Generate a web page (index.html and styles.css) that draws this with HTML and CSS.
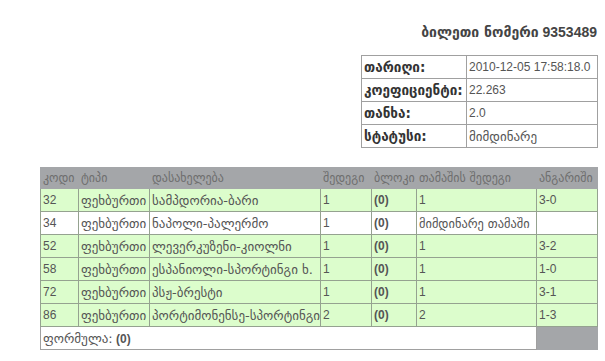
FILE: index.html
```html
<!DOCTYPE html>
<html>
<head>
<meta charset="utf-8">
<link rel="stylesheet" href="styles.css">
</head>
<body>
<div class="page">
  <div class="title"><span class="ka">ბილეთი ნომერი</span> 9353489</div>
  <table class="info">
    <tr><th class="ka">თარიღი:</th><td>2010-12-05 17:58:18.0</td></tr>
    <tr><th class="ka">კოეფიციენტი:</th><td>22.263</td></tr>
    <tr><th class="ka">თანხა:</th><td>2.0</td></tr>
    <tr><th class="ka">სტატუსი:</th><td class="ka">მიმდინარე</td></tr>
  </table>
  <table class="bets">
    <colgroup>
      <col class="c1"><col class="c2"><col class="c3"><col class="c4"><col class="c5"><col class="c6"><col class="c7">
    </colgroup>
    <tr class="head"><th>კოდი</th><th>ტიპი</th><th>დასახელება</th><th>შედეგი</th><th>ბლოკი</th><th>თამაშის შედეგი</th><th>ანგარიში</th></tr>
    <tr class="won"><td>32</td><td class="ka">ფეხბურთი</td><td class="ka">სამპდორია-ბარი</td><td>1</td><td><b>(0)</b></td><td>1</td><td>3-0</td></tr>
    <tr class="open"><td>34</td><td class="ka">ფეხბურთი</td><td class="ka">ნაპოლი-პალერმო</td><td>1</td><td><b>(0)</b></td><td class="ka fit">მიმდინარე თამაში</td><td></td></tr>
    <tr class="won"><td>52</td><td class="ka">ფეხბურთი</td><td class="ka">ლევერკუზენი-კიოლნი</td><td>1</td><td><b>(0)</b></td><td>1</td><td>3-2</td></tr>
    <tr class="won"><td>58</td><td class="ka">ფეხბურთი</td><td class="ka">ესპანიოლი-სპორტინგი ხ.</td><td>1</td><td><b>(0)</b></td><td>1</td><td>1-0</td></tr>
    <tr class="won"><td>72</td><td class="ka">ფეხბურთი</td><td class="ka">პსჟ-ბრესტი</td><td>1</td><td><b>(0)</b></td><td>1</td><td>3-1</td></tr>
    <tr class="won"><td>86</td><td class="ka">ფეხბურთი</td><td class="ka">პორტიმონენსე-სპორტინგი</td><td>2</td><td><b>(0)</b></td><td>2</td><td>1-3</td></tr>
    <tr class="foot"><td colspan="6"><span class="ka">ფორმულა:</span> <b>(0)</b></td><td class="gray"></td></tr>
  </table>
</div>
</body>
</html>
```
FILE: styles.css
```css
html, body {
  margin: 0;
  padding: 0;
  background: #fff;
}
body {
  font-family: "Liberation Sans", "DejaVu Sans", sans-serif;
  font-size: 12px;
  color: #555;
}
.ka {
  font-family: "DejaVu Sans", sans-serif;
  font-size: 13px;
}
.page {
  width: 558px;
  margin-left: 40px;
  padding-top: 24px;
  display: flex;
  flex-direction: column;
}
.title {
  align-self: flex-end;
  font-weight: bold;
  font-size: 14px;
  color: #444;
  line-height: 17px;
  padding-right: 1px;
}
.title .ka {
  font-size: 14px;
}
.info {
  align-self: flex-end;
  margin-top: 14px;
  border-collapse: collapse;
  width: 237px;
}
.info th, .info td {
  border: 1px solid #a0a0a0;
  height: 22px;
  padding: 0 2px;
  text-align: left;
  white-space: nowrap;
}
.info th {
  width: 100px;
  font-weight: bold;
  color: #333;
  font-size: 13.5px;
}
.info td {
  color: #555;
}
.bets {
  margin-top: 19px;
  border-collapse: collapse;
  table-layout: fixed;
  width: 557px;
}
.c1 { width: 38px; }
.c2 { width: 71px; }
.c3 { width: 171px; }
.c4 { width: 51px; }
.c5 { width: 45px; }
.c6 { width: 120px; }
.c7 { width: 61px; }
.bets th, .bets td {
  padding: 0 0 0 2px;
  text-align: left;
  white-space: nowrap;
  overflow: hidden;
}
.bets td.fit {
  font-size: 12.4px;
}
.bets .head th {
  background: #a4a6a9;
  color: #6e6e6e;
  font-family: "DejaVu Sans", sans-serif;
  font-size: 12px;
  font-weight: normal;
  height: 20px;
  border: 1px solid #a4a6a9;
}
.bets td {
  border: 1px solid #95a290;
  height: 22px;
}
.bets .won td {
  background: #dcfdcc;
}
.bets .open td {
  background: #fff;
}
.bets .foot td {
  background: #fff;
  border: 1px solid #a0a0a0;
}
.bets .foot td.gray {
  background: #a4a6a9;
  border-color: #a4a6a9;
}
.bets b {
  color: #555;
}
```
